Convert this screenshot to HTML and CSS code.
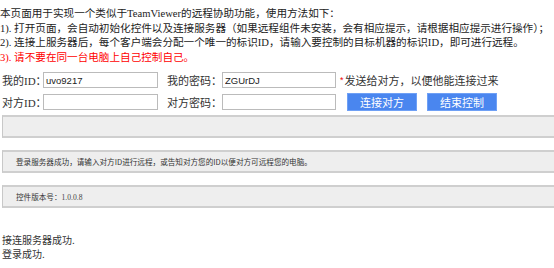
FILE: index.html
```html
<!DOCTYPE html>
<html lang="zh-CN">
<head>
<meta charset="utf-8">
<title>远程协助</title>
<link rel="stylesheet" href="styles.css">
</head>
<body>
<div class="intro">
  <p>本页面用于实现一个类似于TeamViewer的远程协助功能，使用方法如下：</p>
  <p>1). 打开页面，会自动初始化控件以及连接服务器（如果远程组件未安装，会有相应提示，请根据相应提示进行操作）；</p>
  <p>2). 连接上服务器后，每个客户端会分配一个唯一的标识ID，请输入要控制的目标机器的标识ID，即可进行远程。</p>
  <p class="warn">3). 请不要在同一台电脑上自己控制自己。</p>
</div>
<div class="form">
  <div class="row">
    <label class="lbl lbl-id">我的ID：</label>
    <input class="field" type="text" value="uvo9217">
    <label class="lbl lbl-pw">我的密码：</label>
    <input class="field field-pw" type="text" value="ZGUrDJ">
    <span class="star">*</span><span class="hint">发送给对方，以便他能连接过来</span>
  </div>
  <div class="row">
    <label class="lbl lbl-id">对方ID：</label>
    <input class="field" type="text" value="">
    <label class="lbl lbl-pw">对方密码：</label>
    <input class="field field-pw" type="text" value="">
    <button class="btn btn-first">连接对方</button>
    <button class="btn">结束控制</button>
  </div>
</div>
<div class="panel"></div>
<div class="panel"><span class="small">登录服务器成功，请输入对方ID进行远程，或告知对方您的ID以便对方可远程您的电脑。</span></div>
<div class="panel"><span class="small">控件版本号：<span class="num">1.0.0.8</span></span></div>
<div class="log">
  <p>接连服务器成功.</p>
  <p>登录成功.</p>
</div>
</body>
</html>
```
FILE: styles.css
```css
html, body {
  margin: 0;
  padding: 0;
  overflow: hidden;
  background: #fff;
}
body {
  font-family: "Liberation Serif", "Noto Sans CJK SC", serif;
  font-size: 10.6px;
  color: #222;
}
p { margin: 0; }
.intro {
  padding: 7px 0 0 0;
  line-height: 14.5px;
  white-space: nowrap;
}
.intro .warn { color: #f00; }
.form {
  margin-top: 6px;
  padding-left: 2px;
}
.row {
  display: flex;
  align-items: center;
  height: 18px;
  white-space: nowrap;
}
.row + .row { margin-top: 4px; }
.lbl {
  font-size: 11px;
  color: #333;
}
.lbl-id { width: 41px; }
.lbl-pw { width: 55px; margin-left: 9px; }
.field {
  box-sizing: border-box;
  width: 115px;
  height: 16px;
  border: 1px solid #bbb;
  padding: 0 2px;
  font-family: "Liberation Sans", sans-serif;
  font-size: 9.5px;
  color: #222;
  margin: 0;
  outline: none;
}
.field-pw { width: 114px; }
.star {
  color: #e00;
  font-size: 9px;
  margin-left: 4px;
  font-family: "Liberation Sans", sans-serif;
}
.hint {
  font-size: 11px;
  color: #333;
  margin-left: 1px;
}
.btn {
  box-sizing: border-box;
  width: 70px;
  height: 18px;
  margin: 0 0 0 10px;
  padding: 0;
  border: 1px solid #6fa0f5;
  background: #4a86ef;
  color: #fff;
  font-family: "Noto Sans CJK SC", sans-serif;
  font-size: 11px;
  line-height: 16px;
}
.btn-first { margin-left: 11px; }
.panel {
  box-sizing: border-box;
  height: 23px;
  margin: 4px 0 0 2px;
  background: #eee;
  border-top: 2px solid #cfcfcf;
  border-bottom: 2px solid #cfcfcf;
  border-left: 1px solid #c8c8c8;
  padding-left: 13px;
  display: flex;
  align-items: center;
}
.panel + .panel { margin-top: 12px; }
.small {
  font-family: "Noto Sans CJK SC", sans-serif;
  font-size: 7.6px;
  color: #333;
}
.num {
  font-family: "Liberation Serif", serif;
  color: #444;
}
.log {
  margin-top: 25px;
  padding-left: 2px;
  line-height: 14px;
  font-family: "Noto Sans CJK SC", sans-serif;
  font-size: 10px;
  color: #333;
}
```
